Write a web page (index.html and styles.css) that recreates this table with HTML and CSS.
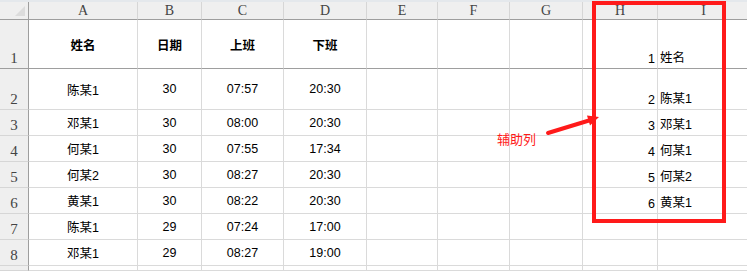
FILE: index.html
```html
<!DOCTYPE html>
<html lang="zh-CN">
<head>
  <meta charset="UTF-8" />
  <title>考勤表</title>
  <link rel="stylesheet" href="styles.css">
</head>
<body>
  <div class="topbar"></div>
  <div class="sheet">
    <div class="row head">
      <div class="rh corner"><span class="tri"></span></div>
      <div class="ch">A</div><div class="ch">B</div><div class="ch">C</div><div class="ch">D</div>
      <div class="ch">E</div><div class="ch">F</div><div class="ch">G</div><div class="ch">H</div><div class="ch">I</div>
    </div>
    <div class="row r1 frozen">
      <div class="rh">1</div>
      <div class="c b">姓名</div><div class="c b">日期</div><div class="c b">上班</div><div class="c b">下班</div>
      <div class="c"></div><div class="c"></div><div class="c"></div>
      <div class="c num">1</div><div class="c txt">姓名</div>
    </div>
    <div class="row r2">
      <div class="rh">2</div>
      <div class="c">陈某1</div><div class="c">30</div><div class="c">07:57</div><div class="c">20:30</div>
      <div class="c"></div><div class="c"></div><div class="c"></div>
      <div class="c num">2</div><div class="c txt">陈某1</div>
    </div>
    <div class="row">
      <div class="rh">3</div>
      <div class="c">邓某1</div><div class="c">30</div><div class="c">08:00</div><div class="c">20:30</div>
      <div class="c"></div><div class="c"></div><div class="c"></div>
      <div class="c num">3</div><div class="c txt">邓某1</div>
    </div>
    <div class="row">
      <div class="rh">4</div>
      <div class="c">何某1</div><div class="c">30</div><div class="c">07:55</div><div class="c">17:34</div>
      <div class="c"></div><div class="c"></div><div class="c"></div>
      <div class="c num">4</div><div class="c txt">何某1</div>
    </div>
    <div class="row">
      <div class="rh">5</div>
      <div class="c">何某2</div><div class="c">30</div><div class="c">08:27</div><div class="c">20:30</div>
      <div class="c"></div><div class="c"></div><div class="c"></div>
      <div class="c num">5</div><div class="c txt">何某2</div>
    </div>
    <div class="row">
      <div class="rh">6</div>
      <div class="c">黄某1</div><div class="c">30</div><div class="c">08:22</div><div class="c">20:30</div>
      <div class="c"></div><div class="c"></div><div class="c"></div>
      <div class="c num">6</div><div class="c txt">黄某1</div>
    </div>
    <div class="row">
      <div class="rh">7</div>
      <div class="c">陈某1</div><div class="c">29</div><div class="c">07:24</div><div class="c">17:00</div>
      <div class="c"></div><div class="c"></div><div class="c"></div>
      <div class="c"></div><div class="c"></div>
    </div>
    <div class="row">
      <div class="rh">8</div>
      <div class="c">邓某1</div><div class="c">29</div><div class="c">08:27</div><div class="c">19:00</div>
      <div class="c"></div><div class="c"></div><div class="c"></div>
      <div class="c"></div><div class="c"></div>
    </div>
    <div class="row last">
      <div class="rh"></div>
      <div class="c"></div><div class="c"></div><div class="c"></div><div class="c"></div>
      <div class="c"></div><div class="c"></div><div class="c"></div>
      <div class="c"></div><div class="c"></div>
    </div>
  </div>

  <!-- annotation: helper column box, arrow and label -->
  <div class="mark-box"></div>
  <svg class="mark-arrow" width="70" height="35" viewBox="0 0 70 35">
    <line x1="8" y1="28" x2="49" y2="15.5" stroke="#ff1a1a" stroke-width="4" stroke-linecap="round" />
    <polygon points="59,12 50,20.5 47,10.5" fill="#ff1a1a" />
  </svg>
  <div class="mark-label">辅助列</div>
</body>
</html>
```

FILE: styles.css
```css
body {
  margin: 0;
  background: #fff;
  font-family: "Liberation Sans", "Noto Sans CJK SC", sans-serif;
  font-size: 12.5px;
  color: #000;
  overflow: hidden;
  position: relative;
  height: 271px;
}
.topbar {
  height: 2px;
  background: #e4e8ec;
}
.sheet {
  display: flex;
  flex-direction: column;
}
.row {
  display: grid;
  grid-template-columns: 29px 109px 64px 82px 83px 71px 72px 73px 75px 92px;
  height: 26px;
}
.row.head { height: 18px; }
.row.r1 { height: 49px; }
.row.r2 { height: 41px; }
.row.last { height: 5px; }

.row > div {
  box-sizing: border-box;
  border-right: 1px solid #dadada;
  border-bottom: 1px solid #dadada;
  display: flex;
  align-items: center;
  justify-content: center;
  min-width: 0;
}
.head > div,
.frozen > div {
  border-bottom-color: #9e9e9e;
}

/* column letters */
.ch {
  background: #efefef;
  font-family: "Liberation Serif", serif;
  font-size: 14px;
  color: #444;
  border-right-color: #d6d6d6 !important;
}

/* row numbers */
.row > .rh {
  background: #efefef;
  border-right: 1px solid #9e9e9e;
  border-bottom-color: #d6d6d6;
  font-family: "Liberation Serif", serif;
  font-size: 15px;
  color: #444;
  align-items: flex-end;
  padding-bottom: 1px;
}
.frozen > .rh,
.head > .rh { border-bottom-color: #9e9e9e; }

.corner { position: relative; }
.tri {
  position: absolute;
  right: 3px;
  bottom: 3px;
  width: 0;
  height: 0;
  border-left: 10px solid transparent;
  border-bottom: 10px solid #dcdcdc;
}

.c.b { font-weight: bold; }

/* helper columns sit at the bottom of their cells */
.row > .num {
  justify-content: flex-end;
  align-items: flex-end;
  padding: 0 2px 2px 0;
}
.row > .txt {
  justify-content: flex-start;
  align-items: flex-end;
  padding: 0 0 2px 2px;
}

.mark-box {
  position: absolute;
  left: 592px;
  top: 1px;
  width: 134px;
  height: 222px;
  box-sizing: border-box;
  border: 4px solid #ff1a1a;
}
.mark-arrow {
  position: absolute;
  left: 540px;
  top: 105px;
}
.mark-label {
  position: absolute;
  left: 497px;
  top: 132px;
  font-size: 13px;
  line-height: 16px;
  color: #ff1a1a;
}
```
